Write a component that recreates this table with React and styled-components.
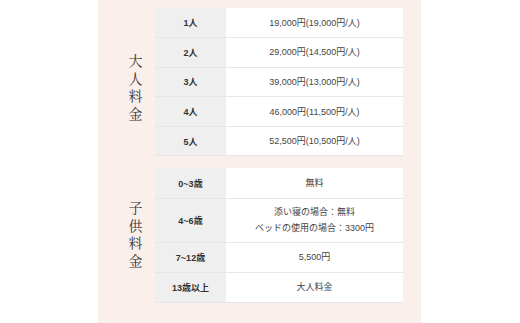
import styled, { createGlobalStyle } from "styled-components";

const GlobalStyle = createGlobalStyle`
  body {
    margin: 0;
    background: #ffffff;
    font-family: "Liberation Sans", "Noto Sans CJK JP", sans-serif;
  }
`;

const Panel = styled.div`
  margin-left: 98px;
  width: 305px;
  height: 315px;
  padding: 8px 18px 0 0;
  background: #fbefeb;
`;

const Section = styled.div`
  display: flex;
  margin-bottom: 12px;
`;

const Label = styled.div`
  width: 57px;
  box-sizing: border-box;
  padding-left: 18px;
  padding-top: ${(p) => p.$shift || 0}px;
  display: flex;
  align-items: center;
  justify-content: center;
  font-family: "Noto Serif CJK JP", "DejaVu Serif", serif;
  font-size: 14px;
  color: #333;
  writing-mode: vertical-rl;
  letter-spacing: 3.5px;
`;

const Table = styled.table`
  width: 248px;
  border-collapse: collapse;
  table-layout: fixed;
`;

const Row = styled.tr`
  height: ${(p) => p.$h}px;
`;

const Head = styled.th`
  width: 71px;
  padding: 0;
  background: #efefef;
  border-bottom: 1px solid #e6e6e6;
  font-size: 9px;
  font-weight: bold;
  color: #333;
  text-align: center;
`;

const Cell = styled.td`
  padding: 0;
  background: #ffffff;
  border-bottom: 1px solid #e6e6e6;
  font-size: 9px;
  line-height: 16px;
  color: #444;
  text-align: center;
`;

const adults = [
  ["1人", "19,000円(19,000円/人)"],
  ["2人", "29,000円(14,500円/人)"],
  ["3人", "39,000円(13,000円/人)"],
  ["4人", "46,000円(11,500円/人)"],
  ["5人", "52,500円(10,500円/人)"],
];

const children = [
  ["0~3歳", ["無料"], 30],
  ["4~6歳", ["添い寝の場合：無料", "ベッドの使用の場合：3300円"], 44],
  ["7~12歳", ["5,500円"], 30],
  ["13歳以上", ["大人料金"], 30],
];

export default function App() {
  return (
    <>
      <GlobalStyle />
      <Panel>
        <Section>
          <Label $shift={14}>大人料金</Label>
          <Table>
            <tbody>
              {adults.map(([k, v]) => (
                <Row key={k} $h={29.6}>
                  <Head>{k}</Head>
                  <Cell>{v}</Cell>
                </Row>
              ))}
            </tbody>
          </Table>
        </Section>
        <Section>
          <Label $shift={0}>子供料金</Label>
          <Table>
            <tbody>
              {children.map(([k, lines, h]) => (
                <Row key={k} $h={h}>
                  <Head>{k}</Head>
                  <Cell>
                    {lines.map((l, i) => (
                      <div key={i}>{l}</div>
                    ))}
                  </Cell>
                </Row>
              ))}
            </tbody>
          </Table>
        </Section>
      </Panel>
    </>
  );
}
